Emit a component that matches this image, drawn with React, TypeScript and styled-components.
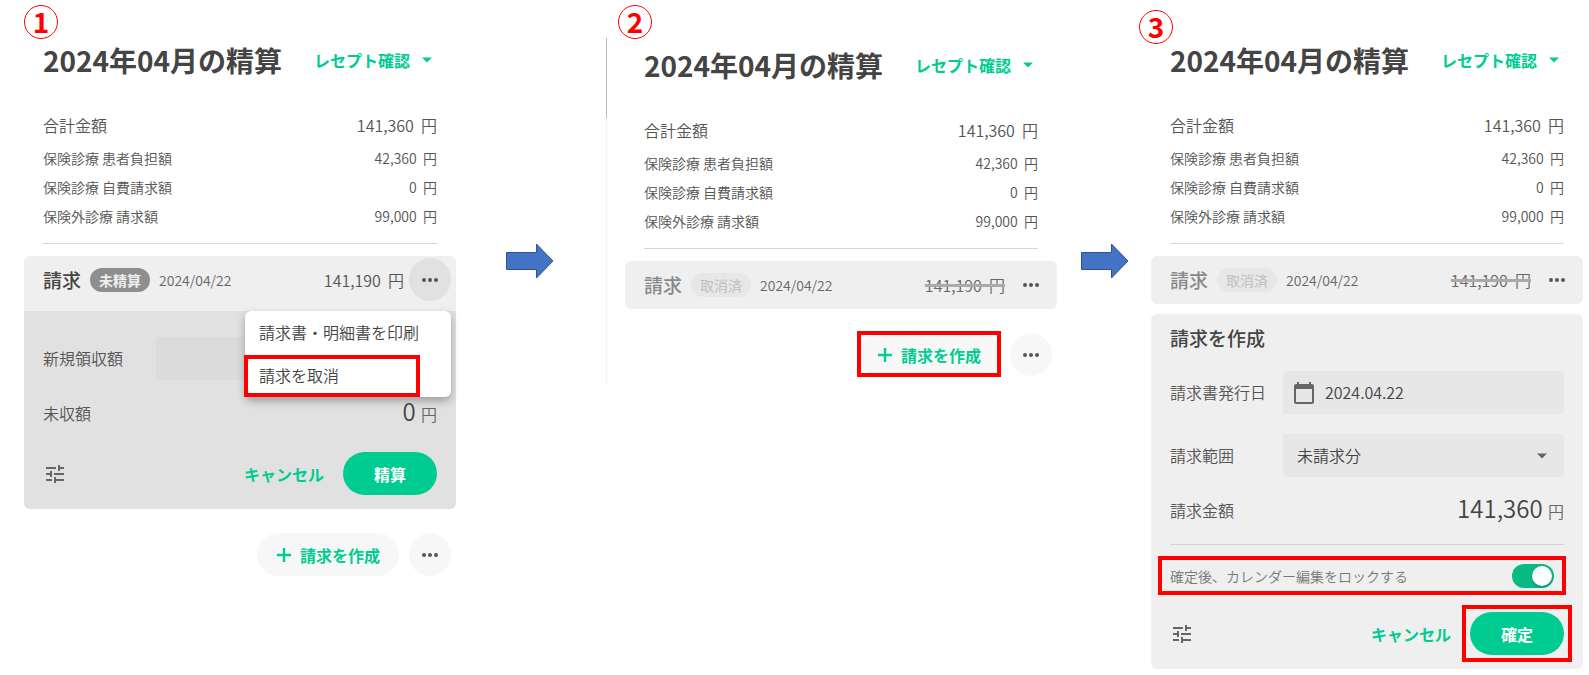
import React from 'react';
import styled, { createGlobalStyle, css } from 'styled-components';

const GREEN = '#00cc92';
const RED = '#ff0000';

const GlobalStyle = createGlobalStyle`
  *, *::before, *::after { box-sizing: border-box; }
  body {
    margin: 0;
    background: #fff;
    color: #555;
    font-family: "Noto Sans CJK JP", "Noto Sans", sans-serif;
    font-size: 16px;
    font-weight: 350;
    line-height: 24px;
  }
  button, input, select { font: inherit; color: inherit; }
  button { cursor: pointer; border: 0; padding: 0; background: none; }
  h2, h3, dl, dd, p { margin: 0; }
`;

const Flow = styled.main`
  display: grid;
  grid-template-columns: minmax(0, 1fr) 169px minmax(0, 1fr) 94px minmax(0, 1fr);
  align-items: start;
  padding: 0 6px 6px 24px;
`;

const Step = styled.section<{ $top: number }>`
  display: flex;
  flex-direction: column;
  padding-top: ${p => p.$top}px;
`;

const StepNumber = styled.p<{ $shift?: number; $gap: number }>`
  width: 34px;
  height: 34px;
  margin: 0 0 ${p => p.$gap}px -${p => p.$shift || 0}px;
  border: 1px solid ${RED};
  border-radius: 50%;
  color: ${RED};
  font-size: 28px;
  font-weight: 700;
  line-height: 30px;
  text-align: center;
`;

const TitleRow = styled.header`
  display: flex;
  align-items: center;
  justify-content: space-between;
  height: 32px;
  padding: 0 24px 0 19px;
  margin-bottom: 31px;
  white-space: nowrap;
`;

const Title = styled.h2`
  color: #444;
  font-size: 28px;
  font-weight: 700;
  line-height: 32px;
`;

const GreenButton = styled.button<{ $gap?: number }>`
  display: inline-flex;
  align-items: center;
  gap: ${p => p.$gap || 8}px;
  color: ${GREEN};
  font-weight: 700;
  white-space: nowrap;
`;

const Totals = styled.dl`
  margin: 0 19px 12px;
  padding-bottom: 13px;
  border-bottom: 1px solid #d6d6d6;
`;

const TotalRow = styled.div<{ $main?: boolean }>`
  display: flex;
  align-items: center;
  justify-content: space-between;
  height: ${p => (p.$main ? 36 : 29)}px;
  font-size: ${p => (p.$main ? 16 : 14)}px;
`;

const Yen = styled.span<{ $large?: boolean; $void?: boolean }>`
  white-space: nowrap;
  ${p => p.$large && css`color: #444; font-size: 24px; line-height: 32px;`}
  ${p => p.$void && css`color: #666; text-decoration: line-through 3px #aaa;`}
`;

const Unit = styled.small`
  font-size: 16px;
  color: #666;
`;

const Card = styled.div<{ $spaced?: boolean }>`
  margin-top: ${p => (p.$spaced ? 10 : 0)}px;
  border-radius: 6px;
  background: #efefef;
`;

const BillHead = styled.div`
  position: relative;
  display: flex;
  align-items: center;
  height: 48px;
  padding: 0 5px 1px 19px;
  white-space: nowrap;
`;

const BillName = styled.h3<{ $void?: boolean }>`
  font-size: 19px;
  font-weight: 500;
  color: ${p => (p.$void ? '#888' : '#444')};
`;

const Status = styled.span<{ $void?: boolean }>`
  height: 24px;
  margin: 0 9px;
  padding: 0 9px;
  border-radius: 12px;
  font-size: 14px;
  font-weight: ${p => (p.$void ? 350 : 700)};
  color: ${p => (p.$void ? '#bbb' : '#efefef')};
  background: ${p => (p.$void ? '#e7e7e7' : '#8e8e8e')};
`;

const BillDate = styled.time`
  font-size: 14px;
  color: #666;
  margin-right: auto;
`;

const MoreButton = styled.button<{ $bg: string }>`
  display: grid;
  place-items: center;
  width: 42px;
  height: 43px;
  margin-left: 5px;
  border-radius: 50%;
  color: #555;
  background: ${p => p.$bg};
`;

const BillBody = styled.form`
  margin-top: 7px;
  padding: 26px 19px 14px;
  border-radius: 0 0 6px 6px;
  background: #e1e1e1;
`;

const CreateForm = styled.form`
  padding: 9px 19px 14px;
`;

const FormTitle = styled.h3`
  margin-bottom: 18px;
  color: #444;
  font-size: 19px;
  font-weight: 500;
  line-height: 30px;
`;

const FieldRow = styled.div<{ $after: number }>`
  display: grid;
  grid-template-columns: 113px minmax(0, 1fr);
  align-items: center;
  height: 43px;
  margin-bottom: ${p => p.$after}px;
  white-space: nowrap;

  > label, > span { padding-bottom: 2px; }
  ${Yen} { text-align: right; }
`;

const FieldBox = styled.div<{ $dark?: boolean }>`
  display: flex;
  align-items: center;
  position: relative;
  height: 43px;
  border-radius: 4px;
  color: #444;
  background: ${p => (p.$dark ? '#dbdbdb' : '#e7e7e7')};

  > svg:first-child { margin-left: 9px; }
`;

const TextInput = styled.input`
  flex: 1;
  min-width: 0;
  height: 43px;
  padding: 0 9px 2px;
  border: 0;
  background: none;
`;

const Select = styled.select`
  appearance: none;
  flex: 1;
  height: 43px;
  padding: 0 14px 2px;
  border: 0;
  background: none;
`;

const SelectCaret = styled.span`
  position: absolute;
  right: 17px;
  top: 0;
  height: 43px;
  display: flex;
  align-items: center;
  color: #666;
  pointer-events: none;
`;

const LockRow = styled.label`
  position: relative;
  display: flex;
  align-items: center;
  justify-content: space-between;
  height: 32px;
  margin: 15px 0 20px;
  padding-right: 10px;
  font-size: 14px;
  color: #777;
`;

const Divider = styled.hr`
  height: 1px;
  margin: 0;
  border: 0;
  background: #d2d2d2;
`;

const Switch = styled.input`
  appearance: none;
  display: flex;
  align-items: center;
  width: 42px;
  height: 24px;
  margin: 0;
  padding: 0 2px;
  border-radius: 12px;
  background: #b4b4b4;

  &::before {
    content: "";
    width: 20px;
    height: 20px;
    border-radius: 50%;
    background: #fff;
    box-shadow: 0 1px 2px rgba(0, 0, 0, 0.3);
  }
  &:checked { background: #08ba83; }
  &:checked::before { margin-left: auto; }
`;

const Actions = styled.div`
  display: flex;
  align-items: center;
  gap: 19px;
  height: 43px;
`;

const IconButton = styled.button`
  display: flex;
  margin-right: auto;
  color: #666;
`;

const Marked = styled.div`
  position: relative;
  display: flex;
`;

const PrimaryButton = styled.button`
  width: 94px;
  height: 43px;
  border-radius: 22px;
  color: #fff;
  background: ${GREEN};
  font-weight: 700;
`;

const Footer = styled.div`
  display: flex;
  justify-content: flex-end;
  gap: 5px;
  margin-top: 24px;
  padding-right: 5px;
`;

const CreateButton = styled(GreenButton)`
  height: 43px;
  padding: 0 19px;
  border-radius: 22px;
  background: #f7f7f7;
`;

const Menu = styled.div`
  position: absolute;
  top: 55px;
  right: 5px;
  z-index: 1;
  width: 206px;
  border-radius: 6px;
  color: #444;
  background: #fff;
  box-shadow: 0 4px 8px rgba(0, 0, 0, 0.3);
`;

const MenuItem = styled.button`
  position: relative;
  display: block;
  width: 100%;
  height: 43px;
  padding: 0 14px 2px;
  text-align: left;
`;

const Highlight = styled.span<{ $inset: string }>`
  position: absolute;
  inset: ${p => p.$inset};
  border: 4px solid ${RED};
  pointer-events: none;
`;

const ArrowCell = styled.div<{ $start: number }>`
  display: flex;
  justify-content: space-between;
  align-items: flex-start;
  padding-left: ${p => p.$start}px;

  > svg { margin-top: 243px; }
`;

const PageEdge = styled.div`
  width: 1px;
  height: 348px;
  margin: 38px 18px 0 0;
  background: linear-gradient(#b9b9b9 80px, #f3f3f3 80px);
`;

const Caret = () => (
  <svg width="10" height="6" viewBox="0 0 10 6" aria-hidden="true">
    <path d="M0 .5h10l-5 5z" fill="currentColor" />
  </svg>
);

const Dots = () => (
  <svg width="18" height="6" viewBox="0 0 18 6" aria-hidden="true" fill="currentColor">
    <circle cx="3" cy="3" r="2" />
    <circle cx="9" cy="3" r="2" />
    <circle cx="15" cy="3" r="2" />
  </svg>
);

const Plus = () => (
  <svg width="16" height="16" viewBox="0 0 16 16" aria-hidden="true">
    <path d="M8 1v14M1 8h14" stroke="currentColor" strokeWidth="2.400" />
  </svg>
);

const Tune = () => (
  <svg width="24" height="24" viewBox="0 0 24 24" aria-hidden="true" fill="currentColor">
    <path d="M3 17v2h6v-2H3zM3 5v2h10V5H3zm10 16v-2h8v-2h-8v-2h-2v6h2zM7 9v2H3v2h4v2h2V9H7zm14 4v-2H11v2h10zm-6-4h2V7h4V5h-4V3h-2v6z" />
  </svg>
);

const Calendar = () => (
  <svg width="24" height="24" viewBox="0 0 24 24" aria-hidden="true" fill="#666">
    <path d="M20 3h-1V1h-2v2H7V1H5v2H4c-1.1 0-2 .9-2 2v16c0 1.1.9 2 2 2h16c1.1 0 2-.9 2-2V5c0-1.1-.9-2-2-2zm0 18H4V8h16v13z" />
  </svg>
);

const BlockArrow = () => (
  <svg width="48" height="36" viewBox="0 0 48 36" aria-hidden="true">
    <path d="M.5 9.500h30v-8.500l16.500 17-16.500 17v-8.500h-30z" fill="#4472c4" stroke="#2f528f" />
  </svg>
);

const totals = [
  { label: '合計金額', value: '141,360' },
  { label: '保険診療 患者負担額', value: '42,360' },
  { label: '保険診療 自費請求額', value: '0' },
  { label: '保険外診療 請求額', value: '99,000' },
];

function Summary() {
  return (
    <>
      <TitleRow>
        <Title>2024年04月の精算</Title>
        <GreenButton type="button" aria-haspopup="menu" $gap={12}>レセプト確認<Caret /></GreenButton>
      </TitleRow>
      <Totals>
        {totals.map((t, i) => (
          <TotalRow key={t.label} $main={i === 0}>
            <dt>{t.label}</dt>
            <dd>{t.value}&nbsp; 円</dd>
          </TotalRow>
        ))}
      </Totals>
    </>
  );
}

function Bill({ cancelled, children }: { cancelled?: boolean; children?: React.ReactNode }) {
  return (
    <BillHead>
      <BillName $void={cancelled}>請求</BillName>
      <Status $void={cancelled}>{cancelled ? '取消済' : '未精算'}</Status>
      <BillDate dateTime="2024-04-22">2024/04/22</BillDate>
      <Yen $void={cancelled}>141,190&nbsp; 円</Yen>
      <MoreButton type="button" aria-label="請求メニュー" $bg={cancelled ? 'transparent' : '#e1e1e1'}><Dots /></MoreButton>
      {children}
    </BillHead>
  );
}

function CreateBar({ marked }: { marked?: boolean }) {
  return (
    <Footer>
      <Marked>
        <CreateButton type="button"><Plus />請求を作成</CreateButton>
        {marked && <Highlight $inset="-2px -1px -1px" />}
      </Marked>
      <MoreButton type="button" aria-label="その他" $bg="#f7f7f7"><Dots /></MoreButton>
    </Footer>
  );
}

function FormActions({ submit, marked }: { submit: string; marked?: boolean }) {
  return (
    <Actions>
      <IconButton type="button" aria-label="詳細設定"><Tune /></IconButton>
      <GreenButton type="button">キャンセル</GreenButton>
      <Marked>
        <PrimaryButton type="button">{submit}</PrimaryButton>
        {marked && <Highlight $inset="-7px -8px" />}
      </Marked>
    </Actions>
  );
}

export default function App() {
  return (
    <>
      <GlobalStyle />
      <Flow>
        <Step $top={5}>
          <StepNumber $gap={5}>1</StepNumber>
          <Summary />
          <Card>
            <Bill>
              <Menu role="menu">
                <MenuItem type="button" role="menuitem">請求書・明細書を印刷</MenuItem>
                <MenuItem type="button" role="menuitem">
                  請求を取消
                  <Highlight $inset="1px 31px 0 -1px" />
                </MenuItem>
              </Menu>
            </Bill>
            <BillBody>
              <FieldRow $after={12}>
                <label htmlFor="receipt">新規領収額</label>
                <FieldBox $dark><TextInput id="receipt" /></FieldBox>
              </FieldRow>
              <FieldRow $after={17}>
                <span>未収額</span>
                <Yen $large>0 <Unit>円</Unit></Yen>
              </FieldRow>
              <FormActions submit="精算" />
            </BillBody>
          </Card>
          <CreateBar />
        </Step>

        <ArrowCell $start={50}>
          <BlockArrow />
          <PageEdge />
        </ArrowCell>

        <Step $top={5}>
          <StepNumber $shift={7} $gap={10}>2</StepNumber>
          <Summary />
          <Card><Bill cancelled /></Card>
          <CreateBar marked />
        </Step>

        <ArrowCell $start={24}>
          <BlockArrow />
        </ArrowCell>

        <Step $top={10}>
          <StepNumber $shift={12} $gap={0}>3</StepNumber>
          <Summary />
          <Card><Bill cancelled /></Card>
          <Card $spaced>
            <CreateForm>
              <FormTitle>請求を作成</FormTitle>
              <FieldRow $after={20}>
                <label htmlFor="issued">請求書発行日</label>
                <FieldBox><Calendar /><TextInput id="issued" defaultValue="2024.04.22" /></FieldBox>
              </FieldRow>
              <FieldRow $after={12}>
                <label htmlFor="range">請求範囲</label>
                <FieldBox>
                  <Select id="range"><option>未請求分</option></Select>
                  <SelectCaret><Caret /></SelectCaret>
                </FieldBox>
              </FieldRow>
              <FieldRow $after={12}>
                <span>請求金額</span>
                <Yen $large>141,360 <Unit>円</Unit></Yen>
              </FieldRow>
              <Divider />
              <LockRow>
                確定後、カレンダー編集をロックする
                <Switch type="checkbox" role="switch" defaultChecked />
                <Highlight $inset="-4px -2px -3px -12px" />
              </LockRow>
              <FormActions submit="確定" marked />
            </CreateForm>
          </Card>
        </Step>
      </Flow>
    </>
  );
}
